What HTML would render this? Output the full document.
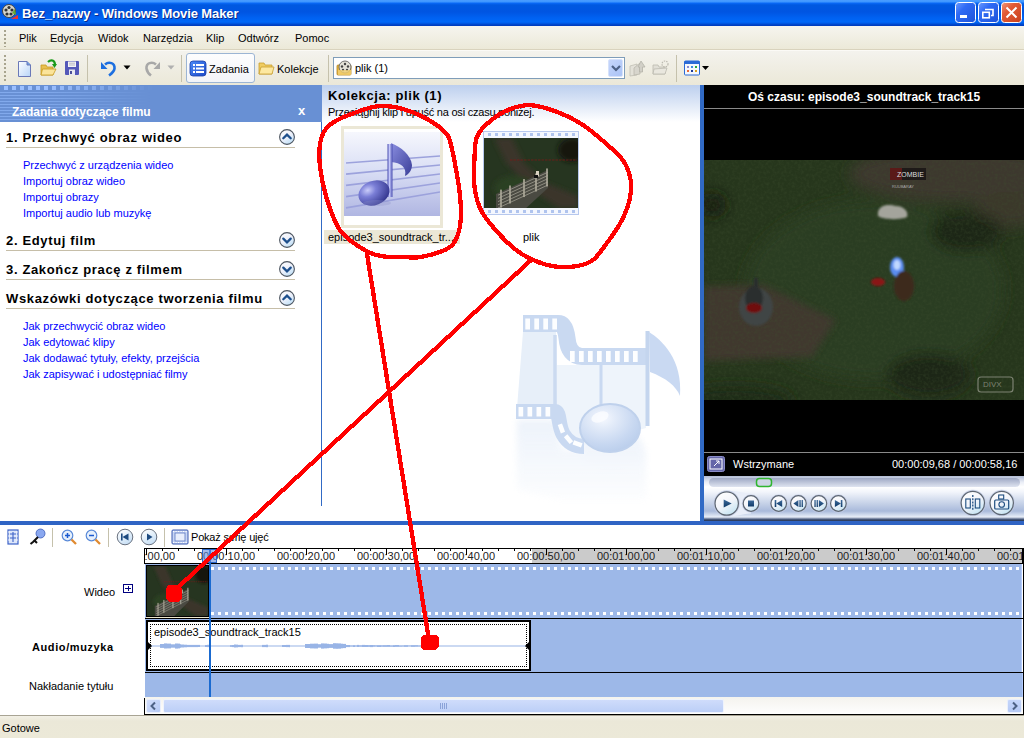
<!DOCTYPE html>
<html><head><meta charset="utf-8">
<style>
*{margin:0;padding:0;box-sizing:border-box}
html,body{width:1024px;height:738px;overflow:hidden;background:#fff;font-family:"Liberation Sans",sans-serif;font-size:11px;color:#000}
.a{position:absolute}
.t{position:absolute;white-space:nowrap;line-height:1}
#title{left:0;top:0;width:1024px;height:26px;background:linear-gradient(#4a9cff 0,#3d95ff 2px,#0a6af8 3px,#0058e0 5px,#0055e2 12px,#0062f2 18px,#0068f8 22px,#0050d8 24px,#003ec0 25px,#003ec0 26px)}
#menu{left:0;top:26px;width:1024px;height:24px;background:linear-gradient(#f6f5ef,#ece9d8);border-bottom:1px solid #d8d2bd}
#tool{left:0;top:50px;width:1024px;height:35px;background:linear-gradient(#f4f3ee,#ebe8d8)}
#task{left:0;top:85px;width:322px;height:436px;background:#fff}
#taskhdr{left:0;top:85px;width:322px;height:37px;background:#6890d4}
#coll{left:322px;top:85px;width:378px;height:436px;background:linear-gradient(#bccfee 0px,#fff 37px,#fff)}
#prev{left:700px;top:85px;width:324px;height:436px;background:#000;border-left:4px solid #316ac5}
#sep{left:0;top:521px;width:1024px;height:4px;background:#2f64c4}
#tltool{left:0;top:525px;width:1024px;height:23px;background:#fff}
#status{left:0;top:715px;width:1024px;height:23px;background:linear-gradient(#a8a494 0,#a8a494 1px,#f2f0e6 1px,#ebe8d8 6px,#ece9d8)}
.ttl{color:#fff;font-weight:bold;font-size:13px;letter-spacing:-0.1px;text-shadow:1px 1px 0 #0a2a8a}
.menu{font-size:11px}
.link{color:#0000ff;font-size:11px}
.rl{font-size:11px;color:#222}
.hd{font-weight:bold;font-size:13px;letter-spacing:0.65px}
</style></head><body>
<div id="title" class="a"></div>
<div class="t ttl" style="left:22px;top:7px;">Bez_nazwy - Windows Movie Maker</div>
<div id="menu" class="a"></div>
<div class="t menu" style="left:19px;top:33px">Plik</div>
<div class="t menu" style="left:50px;top:33px">Edycja</div>
<div class="t menu" style="left:98px;top:33px">Widok</div>
<div class="t menu" style="left:143px;top:33px">Narzędzia</div>
<div class="t menu" style="left:206px;top:33px">Klip</div>
<div class="t menu" style="left:238px;top:33px">Odtwórz</div>
<div class="t menu" style="left:295px;top:33px">Pomoc</div>
<div id="tool" class="a"></div>
<div id="task" class="a"></div>
<div id="taskhdr" class="a"></div>
<div class="a" style="left:0;top:92px;width:322px;height:30px;background:repeating-linear-gradient(to bottom,rgba(150,190,255,.55) 0 1px,transparent 1px 3px);-webkit-mask-image:linear-gradient(to right,#000 0,#000 40px,transparent 150px)"></div>
<div class="a" style="left:4px;top:86px;width:318px;height:4px;background:repeating-linear-gradient(to right,#9cc0ff 0 4px,transparent 4px 8px);-webkit-mask-image:linear-gradient(to right,#000 0,#000 40px,transparent 150px)"></div>
<div class="t" style="left:298px;top:104px;color:#fff;font-weight:bold;font-size:13px">x</div>
<div class="t" style="left:12px;top:106px;color:#fff;font-weight:bold;font-size:12px">Zadania dotyczące filmu</div>

<!-- task pane content --><svg width="0" height="0" style="position:absolute"><defs><linearGradient id="tg" x1="0" y1="0" x2="0.7" y2="1"><stop offset="0" stop-color="#fff"/><stop offset="0.55" stop-color="#eef1fb"/><stop offset="1" stop-color="#bfe0f7"/></linearGradient></defs></svg><svg class="a" style="left:279px;top:129px" width="16" height="16"><circle cx="8" cy="8" r="7.4" fill="url(#tg)" stroke="#4d5560" stroke-width="1.1"/><path d="M4.3 9.3 L8 5.6 L11.7 9.3" stroke="#1d4f8c" stroke-width="2.3" fill="none" stroke-linecap="round"/></svg><svg class="a" style="left:279px;top:232px" width="16" height="16"><circle cx="8" cy="8" r="7.4" fill="url(#tg)" stroke="#4d5560" stroke-width="1.1"/><path d="M4.3 6.6 L8 10.3 L11.7 6.6" stroke="#1d4f8c" stroke-width="2.3" fill="none" stroke-linecap="round"/></svg><svg class="a" style="left:279px;top:261px" width="16" height="16"><circle cx="8" cy="8" r="7.4" fill="url(#tg)" stroke="#4d5560" stroke-width="1.1"/><path d="M4.3 6.6 L8 10.3 L11.7 6.6" stroke="#1d4f8c" stroke-width="2.3" fill="none" stroke-linecap="round"/></svg><svg class="a" style="left:279px;top:290px" width="16" height="16"><circle cx="8" cy="8" r="7.4" fill="url(#tg)" stroke="#4d5560" stroke-width="1.1"/><path d="M4.3 9.3 L8 5.6 L11.7 9.3" stroke="#1d4f8c" stroke-width="2.3" fill="none" stroke-linecap="round"/></svg>
<div class="t hd" style="left:6px;top:131px">1. Przechwyć obraz wideo</div>
<div class="a" style="left:6px;top:147px;width:289px;height:1px;background:#c6bea8"></div>
<div class="t link" style="left:23px;top:160px">Przechwyć z urządzenia wideo</div>
<div class="t link" style="left:23px;top:176px">Importuj obraz wideo</div>
<div class="t link" style="left:23px;top:192px">Importuj obrazy</div>
<div class="t link" style="left:23px;top:208px">Importuj audio lub muzykę</div>
<div class="t hd" style="left:6px;top:234px">2. Edytuj film</div>
<div class="a" style="left:6px;top:250px;width:289px;height:1px;background:#c6bea8"></div>
<div class="t hd" style="left:6px;top:263px">3. Zakończ pracę z filmem</div>
<div class="a" style="left:6px;top:279px;width:289px;height:1px;background:#c6bea8"></div>
<div class="t hd" style="left:6px;top:292px">Wskazówki dotyczące tworzenia filmu</div>
<div class="a" style="left:6px;top:308px;width:289px;height:1px;background:#c6bea8"></div>
<div class="t link" style="left:23px;top:321px">Jak przechwycić obraz wideo</div>
<div class="t link" style="left:23px;top:337px">Jak edytować klipy</div>
<div class="t link" style="left:23px;top:353px">Jak dodawać tytuły, efekty, przejścia</div>
<div class="t link" style="left:23px;top:369px">Jak zapisywać i udostępniać filmy</div>
<div id="coll" class="a"></div>

<div class="t" style="left:328px;top:89px;font-weight:bold;font-size:13px;letter-spacing:0.6px">Kolekcja: plik (1)</div>
<div class="t" style="left:328px;top:107px;font-size:11px;letter-spacing:-0.22px">Przeciągnij klip i upuść na osi czasu poniżej.</div>
<div class="a" style="left:321px;top:122px;width:1px;height:384px;background:#316ac5"></div>
<div id="prev" class="a"></div>

<div class="t" style="left:748px;top:91px;color:#fff;font-weight:bold;font-size:12px">Oś czasu: episode3_soundtrack_track15</div>
<div class="a" style="left:704px;top:108px;width:320px;height:1px;background:#8a8a8a"></div>
<div id="game" class="a" style="left:704px;top:160px;width:320px;height:240px;background:#2c3a22"></div>
<div class="a" style="left:704px;top:452px;width:320px;height:1px;background:#8a8a8a"></div>
<div class="t" style="left:733px;top:459px;color:#fff;font-size:11px">Wstrzymane</div>
<div class="t" style="left:892px;top:459px;color:#fff;font-size:11px">00:00:09,68 / 00:00:58,16</div>
<div class="a" style="left:704px;top:476px;width:320px;height:45px;background:linear-gradient(#b3bdd6 0px,#e9edf6 6px,#fff 11px,#f2f5fb 16px,#cbd6ea 26px,#a9badb 35px,#e8eef8 41px,#5f6f8f 43px,#2f3f5f 44px)"></div>
<div id="sep" class="a"></div>
<div id="tltool" class="a"></div>

<!-- timeline -->
<div class="t" style="left:84px;top:587px;font-size:11px">Wideo</div>
<div class="a" style="left:123px;top:584px;width:10px;height:9px;border:1px solid #000080"></div>
<div class="a" style="left:125px;top:588px;width:6px;height:1px;background:#000080"></div>
<div class="a" style="left:127.5px;top:586px;width:1px;height:5px;background:#000080"></div>
<div class="t" style="left:32px;top:642px;font-size:11px;font-weight:bold;letter-spacing:0.6px">Audio/muzyka</div>
<div class="t" style="left:29px;top:681px;font-size:11px">Nakładanie tytułu</div>
<div class="a" style="left:144px;top:548px;width:880px;height:16px;background:#000"></div><div class="a" style="left:1023px;top:548px;width:1px;height:167px;background:#000"></div><div class="a" style="left:145px;top:618px;width:878px;height:1px;background:#000"></div><div class="a" style="left:145px;top:672px;width:878px;height:1px;background:#000"></div><div class="a" style="left:144px;top:698px;width:1px;height:17px;background:#000"></div><div class="a" style="left:144px;top:714px;width:880px;height:1px;background:#000"></div>
<div class="a" style="left:145px;top:549px;width:877px;height:14px;background:#cbcbcb;overflow:hidden">
  <div class="a" style="left:0;top:0;width:387px;height:14px;background:#fff"></div>
</div>
<div id="ruler" class="a" style="left:145px;top:549px;width:877px;height:14px;overflow:hidden"><div class="t rl" style="left:-29px;top:2px;width:60px;text-align:center">00:00:00,00</div><div class="t rl" style="left:51px;top:2px;width:60px;text-align:center">00:00:10,00</div><div class="t rl" style="left:131px;top:2px;width:60px;text-align:center">00:00:20,00</div><div class="t rl" style="left:211px;top:2px;width:60px;text-align:center">00:00:30,00</div><div class="t rl" style="left:291px;top:2px;width:60px;text-align:center">00:00:40,00</div><div class="t rl" style="left:371px;top:2px;width:60px;text-align:center">00:00:50,00</div><div class="t rl" style="left:451px;top:2px;width:60px;text-align:center">00:01:00,00</div><div class="t rl" style="left:531px;top:2px;width:60px;text-align:center">00:01:10,00</div><div class="t rl" style="left:611px;top:2px;width:60px;text-align:center">00:01:20,00</div><div class="t rl" style="left:691px;top:2px;width:60px;text-align:center">00:01:30,00</div><div class="t rl" style="left:771px;top:2px;width:60px;text-align:center">00:01:40,00</div><div class="t rl" style="left:851px;top:2px;width:60px;text-align:center">00:01:50,00</div><div class="a" style="left:1px;top:0;width:1px;height:6px;background:#000"></div><div class="a" style="left:17px;top:0;width:1px;height:2px;background:#000"></div><div class="a" style="left:33px;top:0;width:1px;height:2px;background:#000"></div><div class="a" style="left:49px;top:0;width:1px;height:2px;background:#000"></div><div class="a" style="left:65px;top:0;width:1px;height:2px;background:#000"></div><div class="a" style="left:81px;top:0;width:1px;height:6px;background:#000"></div><div class="a" style="left:97px;top:0;width:1px;height:2px;background:#000"></div><div class="a" style="left:113px;top:0;width:1px;height:2px;background:#000"></div><div class="a" style="left:129px;top:0;width:1px;height:2px;background:#000"></div><div class="a" style="left:145px;top:0;width:1px;height:2px;background:#000"></div><div class="a" style="left:161px;top:0;width:1px;height:6px;background:#000"></div><div class="a" style="left:177px;top:0;width:1px;height:2px;background:#000"></div><div class="a" style="left:193px;top:0;width:1px;height:2px;background:#000"></div><div class="a" style="left:209px;top:0;width:1px;height:2px;background:#000"></div><div class="a" style="left:225px;top:0;width:1px;height:2px;background:#000"></div><div class="a" style="left:241px;top:0;width:1px;height:6px;background:#000"></div><div class="a" style="left:257px;top:0;width:1px;height:2px;background:#000"></div><div class="a" style="left:273px;top:0;width:1px;height:2px;background:#000"></div><div class="a" style="left:289px;top:0;width:1px;height:2px;background:#000"></div><div class="a" style="left:305px;top:0;width:1px;height:2px;background:#000"></div><div class="a" style="left:321px;top:0;width:1px;height:6px;background:#000"></div><div class="a" style="left:337px;top:0;width:1px;height:2px;background:#000"></div><div class="a" style="left:353px;top:0;width:1px;height:2px;background:#000"></div><div class="a" style="left:369px;top:0;width:1px;height:2px;background:#000"></div><div class="a" style="left:385px;top:0;width:1px;height:2px;background:#000"></div><div class="a" style="left:401px;top:0;width:1px;height:6px;background:#000"></div><div class="a" style="left:417px;top:0;width:1px;height:2px;background:#000"></div><div class="a" style="left:433px;top:0;width:1px;height:2px;background:#000"></div><div class="a" style="left:449px;top:0;width:1px;height:2px;background:#000"></div><div class="a" style="left:465px;top:0;width:1px;height:2px;background:#000"></div><div class="a" style="left:481px;top:0;width:1px;height:6px;background:#000"></div><div class="a" style="left:497px;top:0;width:1px;height:2px;background:#000"></div><div class="a" style="left:513px;top:0;width:1px;height:2px;background:#000"></div><div class="a" style="left:529px;top:0;width:1px;height:2px;background:#000"></div><div class="a" style="left:545px;top:0;width:1px;height:2px;background:#000"></div><div class="a" style="left:561px;top:0;width:1px;height:6px;background:#000"></div><div class="a" style="left:577px;top:0;width:1px;height:2px;background:#000"></div><div class="a" style="left:593px;top:0;width:1px;height:2px;background:#000"></div><div class="a" style="left:609px;top:0;width:1px;height:2px;background:#000"></div><div class="a" style="left:625px;top:0;width:1px;height:2px;background:#000"></div><div class="a" style="left:641px;top:0;width:1px;height:6px;background:#000"></div><div class="a" style="left:657px;top:0;width:1px;height:2px;background:#000"></div><div class="a" style="left:673px;top:0;width:1px;height:2px;background:#000"></div><div class="a" style="left:689px;top:0;width:1px;height:2px;background:#000"></div><div class="a" style="left:705px;top:0;width:1px;height:2px;background:#000"></div><div class="a" style="left:721px;top:0;width:1px;height:6px;background:#000"></div><div class="a" style="left:737px;top:0;width:1px;height:2px;background:#000"></div><div class="a" style="left:753px;top:0;width:1px;height:2px;background:#000"></div><div class="a" style="left:769px;top:0;width:1px;height:2px;background:#000"></div><div class="a" style="left:785px;top:0;width:1px;height:2px;background:#000"></div><div class="a" style="left:801px;top:0;width:1px;height:6px;background:#000"></div><div class="a" style="left:817px;top:0;width:1px;height:2px;background:#000"></div><div class="a" style="left:833px;top:0;width:1px;height:2px;background:#000"></div><div class="a" style="left:849px;top:0;width:1px;height:2px;background:#000"></div><div class="a" style="left:865px;top:0;width:1px;height:2px;background:#000"></div></div>
<div class="a" style="left:145px;top:564px;width:877px;height:54px;background:#9db8e8;border-right:1px solid #b4ccff"></div>
<div class="a" style="left:211px;top:567px;width:811px;height:3px;background:repeating-linear-gradient(to right,#fff 0 3px,transparent 3px 7px)"></div>
<div class="a" style="left:211px;top:612px;width:811px;height:3px;background:repeating-linear-gradient(to right,#fff 0 3px,transparent 3px 7px)"></div>
<div class="a" style="left:145px;top:619px;width:877px;height:53px;background:#9db8e8;border-right:1px solid #b4ccff"></div>
<div class="a" style="left:145px;top:673px;width:878px;height:24px;background:#9db8e8;border-right:1px solid #b4ccff"></div>
<div class="a" style="left:145px;top:697px;width:878px;height:17px;background:linear-gradient(#f4f3ee,#fefefe)"></div>
<div class="a" style="left:146px;top:699px;width:15px;height:14px;border-radius:2px;background:linear-gradient(135deg,#d2defc,#b5c9f5);border:1px solid #e9effc"></div>
<div class="a" style="left:163px;top:699px;width:561px;height:14px;border-radius:2px;background:linear-gradient(#cfdcfb,#bccff7);border:1px solid #eef3fd"></div>
<div class="a" style="left:1007px;top:699px;width:15px;height:14px;border-radius:2px;background:linear-gradient(#c5d6fb,#b5c9f5);border:1px solid #e9effc"></div>
<svg class="a" style="left:146px;top:699px" width="15" height="14"><path d="M9,3.5 L5.5,7 L9,10.5" fill="none" stroke="#4d6185" stroke-width="2"/></svg>
<svg class="a" style="left:1007px;top:699px" width="15" height="14"><path d="M6,3.5 L9.5,7 L6,10.5" fill="none" stroke="#4d6185" stroke-width="2"/></svg>
<div class="a" style="left:440px;top:703px;width:8px;height:6px;background:repeating-linear-gradient(to right,#8aa2d8 0 1px,transparent 1px 2px)"></div>
<!-- audio clip -->
<div class="a" style="left:146px;top:620px;width:385px;height:51px;background:#000"></div>
<div class="a" style="left:148px;top:622px;width:381px;height:47px;background:#fff"></div>
<div class="a" style="left:150px;top:624px;width:377px;height:43px;border:1px dotted #000"></div>
<div class="t" style="left:154px;top:627px;font-size:11px">episode3_soundtrack_track15</div>
<svg class="a" style="left:146px;top:621px" width="385" height="51"><g fill="#98b4e6"><rect x="4" y="24.5" width="10" height="1"/><rect x="14" y="23.0" width="4" height="3.9"/><rect x="18" y="22.4" width="3" height="5.1"/><rect x="21" y="22.6" width="4" height="4.8"/><rect x="25" y="23.3" width="4" height="3.4"/><rect x="29" y="22.5" width="3" height="5.1"/><rect x="32" y="22.6" width="2" height="4.8"/><rect x="34" y="23.2" width="1" height="3.6"/><rect x="35" y="23.5" width="3" height="3.0"/><rect x="38" y="23.7" width="3" height="2.6"/><rect x="41" y="23.9" width="4" height="2.2"/><rect x="45" y="23.9" width="4" height="2.2"/><rect x="49" y="23.9" width="3" height="2.2"/><rect x="52" y="23.9" width="2" height="2.1"/><rect x="54" y="24.5" width="5" height="1"/><rect x="59" y="24.0" width="2" height="2.0"/><rect x="61" y="23.8" width="4" height="2.3"/><rect x="65" y="24.5" width="19" height="1"/><rect x="84" y="24.1" width="2" height="1.8"/><rect x="86" y="24.0" width="2" height="2.1"/><rect x="88" y="23.5" width="2" height="3.0"/><rect x="90" y="23.6" width="2" height="2.8"/><rect x="92" y="23.9" width="3" height="2.2"/><rect x="95" y="23.8" width="2" height="2.4"/><rect x="97" y="24.5" width="19" height="1"/><rect x="116" y="23.9" width="4" height="2.2"/><rect x="120" y="23.7" width="2" height="2.5"/><rect x="122" y="24.5" width="14" height="1"/><rect x="136" y="24.0" width="4" height="2.0"/><rect x="140" y="23.9" width="3" height="2.2"/><rect x="143" y="23.9" width="1" height="2.3"/><rect x="144" y="24.5" width="15" height="1"/><rect x="159" y="23.0" width="2" height="4.0"/><rect x="161" y="23.0" width="3" height="4.0"/><rect x="164" y="22.7" width="4" height="4.7"/><rect x="168" y="22.6" width="4" height="4.9"/><rect x="172" y="23.2" width="3" height="3.5"/><rect x="175" y="22.4" width="3" height="5.2"/><rect x="178" y="22.5" width="3" height="4.9"/><rect x="181" y="22.8" width="2" height="4.4"/><rect x="183" y="23.1" width="4" height="3.8"/><rect x="187" y="22.2" width="3" height="5.5"/><rect x="190" y="22.3" width="2" height="5.5"/><rect x="192" y="22.4" width="3" height="5.3"/><rect x="195" y="22.7" width="2" height="4.6"/><rect x="197" y="22.9" width="3" height="4.2"/><rect x="200" y="24.0" width="4" height="2.1"/><rect x="204" y="24.3" width="3" height="1.4"/><rect x="207" y="24.1" width="2" height="1.9"/><rect x="209" y="24.3" width="2" height="1.4"/><rect x="211" y="23.9" width="2" height="2.1"/><rect x="213" y="24.2" width="3" height="1.6"/><rect x="216" y="23.9" width="3" height="2.1"/><rect x="219" y="24.0" width="3" height="2.0"/><rect x="222" y="24.1" width="2" height="1.8"/><rect x="224" y="24.0" width="3" height="2.1"/><rect x="227" y="24.1" width="2" height="1.7"/><rect x="229" y="24.2" width="2" height="1.5"/><rect x="231" y="24.1" width="4" height="1.9"/><rect x="235" y="24.2" width="2" height="1.6"/><rect x="237" y="24.1" width="4" height="1.8"/><rect x="241" y="24.0" width="3" height="1.9"/><rect x="244" y="24.3" width="3" height="1.5"/><rect x="247" y="24.1" width="2" height="1.9"/><rect x="249" y="24.0" width="4" height="1.9"/><rect x="253" y="24.3" width="3" height="1.5"/><rect x="256" y="24.3" width="2" height="1.4"/><rect x="258" y="24.1" width="4" height="1.8"/><rect x="262" y="24.3" width="3" height="1.3"/><rect x="265" y="24.1" width="4" height="1.8"/><rect x="269" y="24.1" width="3" height="1.7"/><rect x="272" y="24.3" width="3" height="1.4"/><rect x="275" y="24.3" width="1" height="1.3"/><rect x="276" y="24.5" width="105" height="1"/></g><path d="M2,21 L6,25 L2,29Z" fill="#000"/><path d="M383,21 L379,25 L383,29Z" fill="#000"/></svg>
<!-- video thumb -->
<div class="a" style="left:146px;top:565px;width:64px;height:52px;background:#000"></div><div class="a" style="left:146px;top:617px;width:63px;height:1px;background:#efe8cc"></div><div class="a" style="left:147px;top:566px;width:61px;height:50px;overflow:hidden"><svg width="61" height="50" viewBox="0 0 94 70" preserveAspectRatio="none" style="display:block">
<defs><filter id="t2b"><feGaussianBlur stdDeviation="2.5"/></filter></defs>
<rect width="94" height="70" fill="#263520"/>
<g filter="url(#t2b)">
<path d="M10,0 L28,0 L40,25 L62,45 L94,58 L94,70 L75,70 L52,55 L22,25Z" fill="#3b3529"/>
<ellipse cx="88" cy="12" rx="14" ry="12" fill="#121810"/>
<ellipse cx="30" cy="50" rx="20" ry="12" fill="#2c4024"/>
</g>
<path d="M12,72 L12,56 L64,32 L64,50 L40,72Z" fill="#4a4a42"/><line x1="14" y1="70.0" x2="64" y2="47.0" stroke="#8e8c80" stroke-width="1"/><line x1="14" y1="66.8" x2="64" y2="43.8" stroke="#8e8c80" stroke-width="1"/><line x1="14" y1="63.6" x2="64" y2="40.6" stroke="#8e8c80" stroke-width="1"/><line x1="14" y1="60.4" x2="64" y2="37.4" stroke="#8e8c80" stroke-width="1"/><line x1="14" y1="57.2" x2="64" y2="34.2" stroke="#8e8c80" stroke-width="1"/><rect x="16.2" y="51.620000000000005" width="1.6" height="18" fill="#b0ac9c"/><rect x="25.2" y="47.480000000000004" width="1.6" height="18" fill="#b0ac9c"/><rect x="39.2" y="41.04" width="1.6" height="18" fill="#b0ac9c"/><rect x="51.2" y="35.519999999999996" width="1.6" height="18" fill="#b0ac9c"/><rect x="62.2" y="30.459999999999994" width="1.6" height="18" fill="#b0ac9c"/>
<rect x="52" y="33" width="3" height="5" fill="#d8d0c0"/><rect x="50" y="37" width="4" height="3" fill="#111"/>
<line x1="26" y1="22" x2="93" y2="22" stroke="#7a1a18" stroke-width="0.8" stroke-dasharray="2.5,1"/>
</svg></div>
<!-- playhead -->
<div class="a" style="left:209px;top:549px;width:2px;height:148px;background:#1a6ad0"></div>
<div class="a" style="left:202px;top:549px;width:15px;height:14px;background:rgba(100,140,220,.6);border:1px solid #2a66c8"></div>
<div id="status" class="a"></div>
<div class="t" style="left:2px;top:723px">Gotowe</div>
<!-- GAME --><div class="a" style="left:704px;top:160px;width:320px;height:240px;overflow:hidden"><svg width="320" height="240" viewBox="0 0 320 240" preserveAspectRatio="none" style="display:block">
<defs><filter id="gb" x="-100%" y="-100%" width="300%" height="300%" filterUnits="objectBoundingBox"><feGaussianBlur stdDeviation="7"/></filter>
<filter id="gs" x="-50%" y="-50%" width="200%" height="200%"><feGaussianBlur stdDeviation="1.2"/></filter><filter id="gm" x="-20%" y="-20%" width="140%" height="140%"><feGaussianBlur stdDeviation="3.5"/></filter>
<filter id="gn" x="0" y="0" width="100%" height="100%"><feTurbulence type="fractalNoise" baseFrequency="0.35" numOctaves="2" seed="3"/><feColorMatrix values="0 0 0 0 0.05  0 0 0 0 0.08  0 0 0 0 0.03  0 0 0 1.4 -0.55"/></filter></defs>
<rect width="320" height="240" fill="#26361c"/>
<g filter="url(#gb)">
<ellipse cx="170" cy="130" rx="130" ry="90" fill="#2a3d20"/>
<ellipse cx="250" cy="14" rx="105" ry="28" fill="#3d382d"/>
<ellipse cx="305" cy="50" rx="35" ry="18" fill="#3b372c"/>

<ellipse cx="8" cy="45" rx="14" ry="12" fill="#141a10"/>
<ellipse cx="262" cy="72" rx="36" ry="20" fill="#1c2616"/>
<ellipse cx="225" cy="215" rx="42" ry="22" fill="#1d2717"/>
<ellipse cx="30" cy="240" rx="60" ry="14" fill="#1e2a17"/>
</g>
<path d="M0,126 L60,125 L132,160 L108,197 L0,201Z" fill="#3f382d" filter="url(#gm)"/>
<rect width="320" height="240" filter="url(#gn)" opacity="0.5"/>
<g filter="url(#gs)">
<path d="M174,52 C176,44 186,44 192,46 C200,46 205,52 203,57 C196,60 180,60 174,56Z" fill="#a4a49c"/>
<ellipse cx="52" cy="147" rx="17" ry="19" fill="#3f4545"/><ellipse cx="50" cy="138" rx="9" ry="12" fill="#2a2e2e"/>
<rect x="50" y="118" width="4" height="18" fill="#2a2e2e"/>
<ellipse cx="50" cy="148" rx="8" ry="5" fill="#701010"/>
<ellipse cx="193" cy="107" rx="7" ry="10" fill="#5a8cf0"/><ellipse cx="193" cy="105" rx="3.5" ry="5" fill="#c0d8ff"/>
<ellipse cx="200" cy="126" rx="10" ry="15" fill="#3e2c1e"/>
<ellipse cx="174" cy="122" rx="7" ry="4" fill="#8a1212"/>
</g>
<rect x="186" y="8" width="36" height="12" fill="#1e1a18"/><rect x="186" y="8" width="12" height="12" fill="#5a1a18"/>
<text x="193" y="17" font-family="Liberation Sans" font-size="7" fill="#ddd">ZOMBIE</text>
<text x="188" y="28" font-family="Liberation Sans" font-size="4" fill="#aaa">RUUBARAY</text>
<rect x="274" y="217" width="35" height="15" rx="3" fill="none" stroke="#7c8272" stroke-width="1.2"/>
<text x="279" y="227" font-family="Liberation Sans" font-size="8" fill="#7c8272">DIVX</text>
</svg></div><!-- /GAME -->
<!-- COLL -->
<div class="a" style="left:483px;top:131px;width:96px;height:84px;background:#f4f7fe;border:1px solid #b7c8ee"></div>
<div class="a" style="left:485px;top:133px;width:92px;height:3px;background:repeating-linear-gradient(to right,transparent 0 3px,#b0c4ee 3px 6px,transparent 6px 7px)"></div>
<div class="a" style="left:485px;top:210px;width:92px;height:3px;background:repeating-linear-gradient(to right,transparent 0 3px,#b0c4ee 3px 6px,transparent 6px 7px)"></div>
<div class="a" style="left:484px;top:138px;width:94px;height:70px;overflow:hidden"><svg width="94" height="70" viewBox="0 0 94 70" preserveAspectRatio="none" style="display:block">
<defs><filter id="t1b"><feGaussianBlur stdDeviation="2.5"/></filter></defs>
<rect width="94" height="70" fill="#263520"/>
<g filter="url(#t1b)">
<path d="M10,0 L28,0 L40,25 L62,45 L94,58 L94,70 L75,70 L52,55 L22,25Z" fill="#3b3529"/>
<ellipse cx="88" cy="12" rx="14" ry="12" fill="#121810"/>
<ellipse cx="30" cy="50" rx="20" ry="12" fill="#2c4024"/>
</g>
<path d="M12,72 L12,56 L64,32 L64,50 L40,72Z" fill="#4a4a42"/><line x1="14" y1="70.0" x2="64" y2="47.0" stroke="#8e8c80" stroke-width="1"/><line x1="14" y1="66.8" x2="64" y2="43.8" stroke="#8e8c80" stroke-width="1"/><line x1="14" y1="63.6" x2="64" y2="40.6" stroke="#8e8c80" stroke-width="1"/><line x1="14" y1="60.4" x2="64" y2="37.4" stroke="#8e8c80" stroke-width="1"/><line x1="14" y1="57.2" x2="64" y2="34.2" stroke="#8e8c80" stroke-width="1"/><rect x="16.2" y="51.620000000000005" width="1.6" height="18" fill="#b0ac9c"/><rect x="25.2" y="47.480000000000004" width="1.6" height="18" fill="#b0ac9c"/><rect x="39.2" y="41.04" width="1.6" height="18" fill="#b0ac9c"/><rect x="51.2" y="35.519999999999996" width="1.6" height="18" fill="#b0ac9c"/><rect x="62.2" y="30.459999999999994" width="1.6" height="18" fill="#b0ac9c"/>
<rect x="52" y="33" width="3" height="5" fill="#d8d0c0"/><rect x="50" y="37" width="4" height="3" fill="#111"/>
<line x1="26" y1="22" x2="93" y2="22" stroke="#7a1a18" stroke-width="0.8" stroke-dasharray="2.5,1"/>
</svg></div>
<div class="t" style="left:523px;top:232px;font-size:11px">plik</div>
<!-- music thumb -->
<div class="a" style="left:341px;top:126px;width:102px;height:102px;background:#fff;border:3px solid #ebe7d6"></div>
<div class="a" style="left:324px;top:230px;width:136px;height:14px;background:#ebe7d6"></div>
<div class="t" style="left:328px;top:232px;font-size:11px">episode3_soundtrack_tr...</div>
<div class="a" style="left:344px;top:132px;width:96px;height:84px;overflow:hidden">
<svg width="96" height="84" style="display:block">
<defs><linearGradient id="mbg" x1="0" y1="0" x2="0" y2="1"><stop offset="0" stop-color="#f6f7fd"/><stop offset="0.45" stop-color="#dadff5"/><stop offset="1" stop-color="#b0b6e2"/></linearGradient>
<radialGradient id="mnh" cx="0.35" cy="0.3" r="0.75"><stop offset="0" stop-color="#c9ccfa"/><stop offset="0.35" stop-color="#7a7ed6"/><stop offset="1" stop-color="#34378f"/></radialGradient>
<linearGradient id="mst" x1="0" y1="0" x2="1" y2="0"><stop offset="0" stop-color="#4a4eb0"/><stop offset="0.4" stop-color="#c4c8fa"/><stop offset="1" stop-color="#4a4eb0"/></linearGradient>
<linearGradient id="mfl" x1="0" y1="0" x2="1" y2="1"><stop offset="0" stop-color="#8a8ee0"/><stop offset="1" stop-color="#3a3e98"/></linearGradient></defs>
<rect width="96" height="84" fill="url(#mbg)"/>
<g stroke="#9ca2dc" stroke-width="1.7"><line x1="2" y1="31.0" x2="96" y2="24.0"/><line x1="2" y1="42.2" x2="96" y2="33.0"/><line x1="2" y1="53.4" x2="96" y2="42.0"/><line x1="2" y1="64.6" x2="96" y2="51.0"/><line x1="2" y1="75.8" x2="96" y2="60.0"/></g>
<path d="M47,11 C57,15 67,23 68,33 C68,38 65,42 61,44 C63,35 57,31 47,30Z" fill="url(#mfl)"/>
<rect x="43.5" y="12" width="5" height="53" fill="url(#mst)"/>
<ellipse cx="30" cy="61" rx="16" ry="12" fill="url(#mnh)" transform="rotate(-22 30 61)"/>
<ellipse cx="33" cy="71" rx="14" ry="3" fill="#8a8ec8" opacity="0.3"/>
</svg></div>
<!-- /COLL -->
<!-- WM --><svg class="a" style="left:500px;top:300px" width="200" height="220">
<defs>
<radialGradient id="wmh" cx="0.38" cy="0.3" r="0.75"><stop offset="0" stop-color="#f6f9ff"/><stop offset="0.25" stop-color="#e4ecf9"/><stop offset="0.7" stop-color="#c8d8f1"/><stop offset="1" stop-color="#b9cdeb"/></radialGradient>
<linearGradient id="wmfade" x1="0" y1="0" x2="0" y2="1"><stop offset="0" stop-color="#fff" stop-opacity="1"/><stop offset="1" stop-color="#fff" stop-opacity="0"/></linearGradient>
<filter id="wmb" x="-20%" y="-20%" width="140%" height="140%"><feGaussianBlur stdDeviation="3"/></filter>
<mask id="wmm"><rect x="0" y="105" width="200" height="110" fill="url(#wmfade)"/></mask>
</defs>
<g mask="url(#wmm)" filter="url(#wmb)" opacity="0.55">
<path d="M17,120 L55,120 L62,150 L146,150 L146,200 L60,200 L17,190Z" fill="#d9e5f6"/>
<ellipse cx="112" cy="150" rx="32" ry="22" fill="#d5e2f5"/>
</g>
<path d="M23,32 L56,32 L57,108 L17,108Z" fill="#e7eff9"/>
<path d="M57,65 L146,65 L146,128 L82,146 L62,132 L57,108Z" fill="#eef4fb"/>
<path d="M41,23.5 L58,23.5 C64,23.5 66,30 67,38 C68,50 73,56.5 82,56.5 L146,56.5" fill="none" stroke="#c9d9f1" stroke-width="17"/>
<rect x="23" y="15" width="20" height="17" fill="#c9d9f1"/>
<g fill="#fdfeff"><rect x="25.3" y="18.5" width="4.7" height="11"/><rect x="34.3" y="18.5" width="4.7" height="11"/><rect x="43.3" y="18.5" width="4.7" height="11"/><rect x="52.3" y="18.5" width="4.7" height="11"/><rect x="70.0" y="51" width="4.7" height="11"/><rect x="79.0" y="51" width="4.7" height="11"/><rect x="88.0" y="51" width="4.7" height="11"/><rect x="97.0" y="51" width="4.7" height="11"/><rect x="106.0" y="51" width="4.7" height="11"/><rect x="115.0" y="51" width="4.7" height="11"/><rect x="124.0" y="51" width="4.7" height="11"/><rect x="133.0" y="51" width="4.7" height="11"/></g>
<path d="M55,35 L55,108" stroke="#cbdaf0" stroke-width="3.5"/>
<path d="M101,65 L101,108" stroke="#c9d9f1" stroke-width="3"/>
<rect x="16" y="104" width="39" height="15" fill="#c9d9f1"/>
<g fill="#fdfeff"><rect x="18.5" y="107" width="4.7" height="9.5"/><rect x="27.5" y="107" width="4.7" height="9.5"/><rect x="36.5" y="107" width="4.7" height="9.5"/><rect x="45.5" y="107" width="4.7" height="9.5"/></g>
<path d="M55,111.5 C60,111.5 58,125 63,134 C67,141 74,146.5 84,146.5" fill="none" stroke="#c9d9f1" stroke-width="15"/>
<g fill="#fdfeff"><rect x="59" y="124" width="4.5" height="9" transform="rotate(-20 61 128)"/><rect x="66" y="135" width="4.5" height="9" transform="rotate(-40 68 139)"/><rect x="75" y="140" width="4.5" height="9" transform="rotate(-70 77 144)"/></g>
<rect x="145.5" y="31" width="4" height="95" fill="#c4d5ee"/>
<path d="M149,32 C162,40 183,60 180,96 C176,86 166,78 150,72Z" fill="#c9d9f2"/>
<ellipse cx="110" cy="128" rx="30" ry="24" fill="url(#wmh)" stroke="#bfd1ec" stroke-width="2"/>
<ellipse cx="100" cy="117" rx="9" ry="5" fill="#fbfdff" opacity="0.8" transform="rotate(-20 100 117)"/>
</svg><!-- /WM -->
<!-- TOOLBAR -->
<svg class="a" style="left:955px;top:2px" width="67" height="22">
<defs><linearGradient id="bb" x1="0" y1="0" x2="1" y2="1"><stop offset="0" stop-color="#6d9bff"/><stop offset="0.35" stop-color="#2f6bf5"/><stop offset="1" stop-color="#1d52d8"/></linearGradient>
<linearGradient id="rb" x1="0" y1="0" x2="1" y2="1"><stop offset="0" stop-color="#f09a7c"/><stop offset="0.35" stop-color="#e35b36"/><stop offset="1" stop-color="#c8401c"/></linearGradient></defs>
<rect x="0.5" y="0.5" width="20" height="20" rx="3" fill="url(#bb)" stroke="#fff"/>
<rect x="5" y="13" width="7" height="3" fill="#fff"/>
<rect x="23.5" y="0.5" width="20" height="20" rx="3" fill="url(#bb)" stroke="#fff"/>
<path d="M30,7.5 h8 v6 h-2" fill="none" stroke="#fff" stroke-width="1.6"/><rect x="27.8" y="10.3" width="6.5" height="5.5" fill="none" stroke="#fff" stroke-width="1.6"/>
<rect x="46.5" y="0.5" width="20" height="20" rx="3" fill="url(#rb)" stroke="#fff"/>
<path d="M51.5,5.5 L61.5,15.5 M61.5,5.5 L51.5,15.5" stroke="#fff" stroke-width="2"/>
</svg>
<svg class="a" style="left:2px;top:3px" width="17" height="17">
<circle cx="7" cy="8" r="6.5" fill="#d8d8d0" stroke="#444" stroke-width="1"/>
<g fill="#333"><circle cx="7" cy="4.5" r="1.6"/><circle cx="4" cy="7" r="1.6"/><circle cx="10" cy="7" r="1.6"/><circle cx="5" cy="11" r="1.6"/><circle cx="9" cy="11" r="1.6"/></g>
<path d="M10,10 L13,6 L14,12Z" fill="#6a3"/><path d="M9,16 L16,12 L16,16Z" fill="#e33"/>
</svg>
<!-- grips -->
<div class="a" style="left:4px;top:30px;width:2px;height:17px;background:repeating-linear-gradient(to bottom,#a8a48e 0 2px,transparent 2px 4px)"></div>
<div class="a" style="left:4px;top:55px;width:2px;height:26px;background:repeating-linear-gradient(to bottom,#a8a48e 0 2px,transparent 2px 4px)"></div>
<div class="a" style="left:0;top:49px;width:1024px;height:1px;background:#d9d3bd"></div>
<div class="a" style="left:0;top:50px;width:1024px;height:1px;background:#fbfaf6"></div>
<!-- separators -->
<div class="a" style="left:87px;top:55px;width:1px;height:27px;background:#c5c1ac"></div>
<div class="a" style="left:181px;top:55px;width:1px;height:27px;background:#c5c1ac"></div>
<div class="a" style="left:328px;top:55px;width:1px;height:27px;background:#c5c1ac"></div>
<div class="a" style="left:676px;top:55px;width:1px;height:27px;background:#c5c1ac"></div>
<!-- new -->
<svg class="a" style="left:17px;top:60px" width="16" height="18">
<defs><linearGradient id="nd" x1="0" y1="0" x2="1" y2="1"><stop offset="0" stop-color="#fff"/><stop offset="1" stop-color="#b8d4f8"/></linearGradient></defs>
<path d="M1.5,1.5 L10,1.5 L13.5,5 L13.5,16.5 L1.5,16.5Z" fill="url(#nd)" stroke="#6a78b8"/><path d="M10,1.5 L10,5 L13.5,5" fill="#6aa0e8" stroke="#6a78b8"/>
</svg>
<!-- open -->
<svg class="a" style="left:40px;top:59px" width="18" height="18">
<path d="M1,6 L6,6 L7,8 L13,8 L13,16 L1,16Z" fill="#e8c050" stroke="#c89a20" stroke-width="0.8"/>
<path d="M2.5,10 L16,10 L13,16 L1,16Z" fill="#fbe49a" stroke="#c89a20" stroke-width="0.8"/>
<path d="M8,3 C11,0 15,1 15,6" fill="none" stroke="#1a9a1a" stroke-width="2.2"/><path d="M12,5 L17,5 L14.5,9Z" fill="#1a9a1a"/>
</svg>
<!-- save -->
<svg class="a" style="left:64px;top:60px" width="16" height="16">
<rect x="1" y="1" width="14" height="14" rx="1" fill="#5458b8"/><rect x="4" y="1.5" width="8" height="5.5" fill="#f4f4f4"/><line x1="5" y1="3.2" x2="11" y2="3.2" stroke="#aab" stroke-width="0.8"/><line x1="5" y1="5" x2="11" y2="5" stroke="#aab" stroke-width="0.8"/><rect x="5" y="9.5" width="6" height="5.5" fill="#e8e8f0"/><rect x="6" y="11" width="2" height="3" fill="#4a4e98"/>
</svg>
<!-- undo -->
<svg class="a" style="left:100px;top:60px" width="18" height="17">
<path d="M5,4.5 C9,1 15,3 14.5,8.5 C14,12 11,14 9,15.5" fill="none" stroke="#1d6fe0" stroke-width="2.6"/><path d="M1,2 L7.5,9 L1,9Z" fill="#1d6fe0"/>
</svg>
<svg class="a" style="left:123px;top:65px" width="8" height="5"><path d="M0.5,0.5 L7.5,0.5 L4,4.5Z" fill="#000"/></svg>
<svg class="a" style="left:143px;top:60px" width="18" height="17">
<path d="M13,4.5 C9,1 3,3 3.5,8.5 C4,12 6,14 8,15.5" fill="none" stroke="#a8a8a8" stroke-width="2.6"/><path d="M17,2 L10.5,9 L17,9Z" fill="#a8a8a8"/>
</svg>
<svg class="a" style="left:167px;top:65px" width="8" height="5"><path d="M0.5,0.5 L7.5,0.5 L4,4.5Z" fill="#b0b0b0"/></svg>
<!-- Zadania button -->
<div class="a" style="left:186px;top:53px;width:69px;height:30px;border:1px solid #9cb5d4;border-radius:3px;background:linear-gradient(#fdfdfe,#f2f4f8)"></div>
<svg class="a" style="left:189px;top:60px" width="18" height="17">
<defs><linearGradient id="zd" x1="0" y1="0" x2="1" y2="1"><stop offset="0" stop-color="#4d8cf8"/><stop offset="1" stop-color="#1a48c8"/></linearGradient></defs>
<rect x="1" y="1" width="16" height="15" rx="3" fill="url(#zd)" stroke="#1a3fa8" stroke-width="0.8"/>
<g fill="#fff"><rect x="4" y="4" width="2" height="2"/><rect x="7" y="4" width="8" height="2"/><rect x="4" y="7.5" width="2" height="2"/><rect x="7" y="7.5" width="8" height="2"/><rect x="4" y="11" width="2" height="2"/><rect x="7" y="11" width="8" height="2"/></g>
</svg>
<div class="t" style="left:209px;top:64px;font-size:11px">Zadania</div>
<svg class="a" style="left:258px;top:60px" width="17" height="16">
<path d="M1,3 L6,3 L7,5 L14,5 L14,14 L1,14Z" fill="#f0cc60" stroke="#c8a030" stroke-width="0.8"/>
<path d="M3,7 L16,7 L14,14 L1,14Z" fill="#fde8a0" stroke="#c8a030" stroke-width="0.8"/>
</svg>
<div class="t" style="left:277px;top:64px;font-size:11px">Kolekcje</div>
<!-- combo -->
<div class="a" style="left:333px;top:57px;width:292px;height:22px;border:1px solid #7f9db9;background:#fff"></div>
<div class="a" style="left:608px;top:59px;width:15px;height:18px;border-radius:2px;background:linear-gradient(135deg,#c6d6fb,#aac3f6);border:1px solid #d6e2fb"></div>
<svg class="a" style="left:610px;top:63px" width="12" height="10"><path d="M2,3 L6,7 L10,3" fill="none" stroke="#4d6185" stroke-width="2.2"/></svg>
<svg class="a" style="left:336px;top:59px" width="18" height="18">
<rect x="1" y="6" width="14" height="10" rx="1" fill="#e8b840" stroke="#b08020" stroke-width="0.8"/>
<circle cx="9" cy="8" r="6" fill="#e4e2d8" stroke="#555" stroke-width="0.8"/>
<g fill="#444"><circle cx="9" cy="5" r="1.2"/><circle cx="6" cy="7.5" r="1.2"/><circle cx="12" cy="7.5" r="1.2"/><circle cx="7" cy="11" r="1.2"/><circle cx="11" cy="11" r="1.2"/></g>
<rect x="2" y="11" width="13" height="5" fill="#f3d070" opacity="0.8"/>
</svg>
<div class="t" style="left:355px;top:63px;font-size:11px">plik (1)</div>
<svg class="a" style="left:629px;top:59px" width="18" height="18" opacity="0.75">
<path d="M1,7 L8,5 L8,16 L1,17Z" fill="#e0ded6" stroke="#b0aea4" stroke-width="0.8"/>
<path d="M5,9 L11,4 L11,15 L5,16Z" fill="#d0cec6" stroke="#a8a69c" stroke-width="0.8"/>
<path d="M9,8 L12,2 L16,8 L13.5,8 L13.5,13 L10.5,13 L10.5,8Z" fill="#c8c6be" stroke="#a09e94" stroke-width="0.8"/>
</svg>
<svg class="a" style="left:652px;top:59px" width="18" height="18" opacity="0.75">
<path d="M1,6 L6,6 L7,8 L13,8 L13,15 L1,15Z" fill="#dcdad2" stroke="#aaa89e" stroke-width="0.8"/>
<path d="M2,10 L15,9 L13,15 L1,15Z" fill="#e8e6de" stroke="#aaa89e" stroke-width="0.8"/>
<circle cx="13" cy="5" r="3" fill="none" stroke="#a8a69c" stroke-width="1.2" stroke-dasharray="1.5,1"/>
</svg>
<svg class="a" style="left:684px;top:60px" width="17" height="16">
<rect x="0.5" y="1" width="15" height="14" rx="1" fill="#f6f8fc" stroke="#2b6ad6"/><rect x="0.5" y="1" width="15" height="3" fill="#2b6ad6"/>
<rect x="3" y="6" width="2" height="2" fill="#8a8ad0"/><rect x="7" y="6" width="2" height="2" fill="#3a8ae0"/><rect x="11" y="6" width="2" height="2" fill="#2aaa3a"/>
<rect x="3" y="10" width="2" height="2" fill="#e86a3a"/><rect x="7" y="10" width="2" height="2" fill="#1a3a9a"/><rect x="11" y="10" width="2" height="2" fill="#d8a020"/>
</svg>
<svg class="a" style="left:702px;top:66px" width="7" height="4"><path d="M0,0 L7,0 L3.5,4Z" fill="#000"/></svg>
<!-- /TOOLBAR -->
<!-- CTRL --><svg class="a" style="left:704px;top:476px" width="320" height="45">
<defs><linearGradient id="pbg" x1="0.2" y1="0" x2="0.8" y2="1"><stop offset="0" stop-color="#ffffff"/><stop offset="0.5" stop-color="#f2f4fa"/><stop offset="1" stop-color="#bfe2f2"/></linearGradient>
<linearGradient id="pgl" x1="0" y1="0" x2="0" y2="1"><stop offset="0" stop-color="#3d6a9a"/><stop offset="1" stop-color="#0f3a68"/></linearGradient>
<linearGradient id="sk" x1="0" y1="0" x2="0" y2="1"><stop offset="0" stop-color="#9ea8c4"/><stop offset="1" stop-color="#dfe4f0"/></linearGradient></defs>
<rect x="5" y="2" width="311" height="9" rx="4.5" fill="url(#sk)"/>
<rect x="52.5" y="2.5" width="15" height="8" rx="3" fill="#cdd5e4" stroke="#2fb52f" stroke-width="1.5"/>
<path d="M22.7,14.5 C34.7,14.5 39.0,17.5 47.0,17.5 L47.0,37.5 C39.0,37.5 34.7,40.5 22.7,40.5 Z" fill="#e9eef9"/><circle cx="22.700000000000045" cy="27.5" r="13.2" fill="#c4cde6" opacity="0.8"/><circle cx="22.700000000000045" cy="27.5" r="11.7" fill="url(#pbg)" stroke="#5d6672" stroke-width="1.2"/><path d="M19.700000000000045,23.5 L27.700000000000045,27.5 L19.700000000000045,31.5Z" fill="url(#pgl)"/><circle cx="47" cy="27.5" r="9.3" fill="#c4cde6" opacity="0.8"/><circle cx="47" cy="27.5" r="7.8" fill="url(#pbg)" stroke="#5d6672" stroke-width="1.2"/><rect x="44" y="24.5" width="6" height="6" fill="url(#pgl)"/><circle cx="74.70000000000005" cy="27.5" r="9.3" fill="#c4cde6" opacity="0.8"/><circle cx="74.70000000000005" cy="27.5" r="7.8" fill="url(#pbg)" stroke="#5d6672" stroke-width="1.2"/><rect x="70.70000000000005" y="24.0" width="1.6" height="7" fill="url(#pgl)"/><path d="M72.20000000000005,27.5 L78.20000000000005,24.0 L78.20000000000005,31.0Z" fill="url(#pgl)"/><circle cx="94.39999999999998" cy="27.5" r="9.3" fill="#c4cde6" opacity="0.8"/><circle cx="94.39999999999998" cy="27.5" r="7.8" fill="url(#pbg)" stroke="#5d6672" stroke-width="1.2"/><path d="M89.39999999999998,27.5 L94.39999999999998,24.0 L94.39999999999998,31.0Z" fill="url(#pgl)"/><rect x="95.39999999999998" y="24.0" width="1.3" height="7" fill="url(#pgl)"/><rect x="97.59999999999998" y="24.0" width="1.3" height="7" fill="url(#pgl)"/><circle cx="114.89999999999998" cy="27.5" r="9.3" fill="#c4cde6" opacity="0.8"/><circle cx="114.89999999999998" cy="27.5" r="7.8" fill="url(#pbg)" stroke="#5d6672" stroke-width="1.2"/><path d="M119.89999999999998,27.5 L114.89999999999998,24.0 L114.89999999999998,31.0Z" fill="url(#pgl)"/><rect x="112.59999999999998" y="24.0" width="1.3" height="7" fill="url(#pgl)"/><rect x="110.39999999999998" y="24.0" width="1.3" height="7" fill="url(#pgl)"/><circle cx="134.39999999999998" cy="27.5" r="9.3" fill="#c4cde6" opacity="0.8"/><circle cx="134.39999999999998" cy="27.5" r="7.8" fill="url(#pbg)" stroke="#5d6672" stroke-width="1.2"/><rect x="136.79999999999998" y="24.0" width="1.6" height="7" fill="url(#pgl)"/><path d="M136.89999999999998,27.5 L130.89999999999998,24.0 L130.89999999999998,31.0Z" fill="url(#pgl)"/><circle cx="268.79999999999995" cy="27" r="13.2" fill="#c4cde6" opacity="0.8"/><circle cx="268.79999999999995" cy="27" r="11.7" fill="url(#pbg)" stroke="#5d6672" stroke-width="1.2"/><rect x="261.79999999999995" y="23" width="4.5" height="9" fill="none" stroke="#1d4d80" stroke-width="1.1"/><rect x="271.29999999999995" y="23" width="4.5" height="9" fill="none" stroke="#1d4d80" stroke-width="1.1"/><line x1="268.79999999999995" y1="19" x2="268.79999999999995" y2="35" stroke="#1d4d80" stroke-width="1.3" stroke-dasharray="2,1.2"/><circle cx="297.70000000000005" cy="27" r="13.2" fill="#c4cde6" opacity="0.8"/><circle cx="297.70000000000005" cy="27" r="11.7" fill="url(#pbg)" stroke="#5d6672" stroke-width="1.2"/><rect x="290.70000000000005" y="24" width="14" height="9" rx="1" fill="none" stroke="#1d4d80" stroke-width="1.2"/><rect x="294.70000000000005" y="19" width="5" height="4" fill="none" stroke="#1d4d80" stroke-width="1.1"/><circle cx="297.70000000000005" cy="28.5" r="2.8" fill="none" stroke="#1d4d80" stroke-width="1.1"/>
</svg><!-- /CTRL -->
<!-- STAT --><svg class="a" style="left:707px;top:456px" width="18" height="16">
<rect x="0.5" y="0.5" width="17" height="15" rx="2" fill="#6466a8" stroke="#8a8cc8"/>
<rect x="3" y="3" width="12" height="10" fill="none" stroke="#fff" stroke-width="1"/>
<path d="M7,10 L12,5 M9,5 L12,5 L12,8" stroke="#fff" stroke-width="1" fill="none"/></svg><!-- /STAT -->
<!-- TLTOOL -->
<div class="a" style="left:52px;top:528px;width:1px;height:19px;background:#c5c1ac"></div>
<div class="a" style="left:108px;top:528px;width:1px;height:19px;background:#c5c1ac"></div>
<div class="a" style="left:164px;top:528px;width:1px;height:19px;background:#c5c1ac"></div>
<svg class="a" style="left:7px;top:529px" width="13" height="16">
<rect x="1" y="1" width="10" height="14" fill="#dde6fa" stroke="#3d63c8" stroke-width="1.2"/>
<path d="M6,3 L6,13 M3,5 L9,5 M3,9 L9,9" stroke="#3d63c8" stroke-width="1.1"/>
<path d="M1,3 h2 M1,7 h2 M1,11 h2 M9,3 h2 M9,7 h2 M9,11 h2" stroke="#fff" stroke-width="0.8"/>
</svg>
<svg class="a" style="left:29px;top:528px" width="17" height="17">
<circle cx="11.5" cy="5.5" r="4.5" fill="#8aa8f0" stroke="#3a5ab8" stroke-width="0.8"/>
<path d="M9,9 L4,14 L1.5,16 M5,12 L8,15" stroke="#111" stroke-width="2" fill="none"/>
</svg>
<svg class="a" style="left:61px;top:529px" width="17" height="17">
<circle cx="6.5" cy="6.5" r="5.3" fill="#e6f0fc" stroke="#5a8ad8" stroke-width="1.2"/>
<path d="M4,6.5 h5 M6.5,4 v5" stroke="#1a5ad0" stroke-width="1.5"/>
<path d="M10.5,10.5 L15,15" stroke="#e08a30" stroke-width="2.3"/>
</svg>
<svg class="a" style="left:85px;top:529px" width="17" height="17">
<circle cx="6.5" cy="6.5" r="5.3" fill="#e6f0fc" stroke="#5a8ad8" stroke-width="1.2"/>
<path d="M4,6.5 h5" stroke="#1a5ad0" stroke-width="1.5"/>
<path d="M10.5,10.5 L15,15" stroke="#e08a30" stroke-width="2.3"/>
</svg>
<svg class="a" style="left:116px;top:528px" width="18" height="18">
<defs><linearGradient id="tbg" x1="0.2" y1="0" x2="0.8" y2="1"><stop offset="0" stop-color="#fff"/><stop offset="1" stop-color="#c2dcf4"/></linearGradient></defs>
<circle cx="9" cy="9" r="7.8" fill="url(#tbg)" stroke="#6a7280" stroke-width="1"/>
<rect x="5" y="5.5" width="1.6" height="7" fill="#1d4a80"/><path d="M6.5,9 L12.5,5.5 L12.5,12.5Z" fill="#1d4a80"/>
</svg>
<svg class="a" style="left:140px;top:528px" width="18" height="18">
<circle cx="9" cy="9" r="7.8" fill="url(#tbg)" stroke="#6a7280" stroke-width="1"/>
<path d="M7,5.5 L12.5,9 L7,12.5Z" fill="#1d4a80"/>
</svg>
<svg class="a" style="left:171px;top:529px" width="18" height="16">
<rect x="1" y="1" width="16" height="14" rx="1" fill="#c8d6f4" stroke="#3d5ab0" stroke-width="1"/>
<rect x="4" y="4" width="10" height="8" fill="#e8eefc" stroke="#5a76c0" stroke-width="0.8"/>
<path d="M2,2.5 h14 M2,13.5 h14" stroke="#fff" stroke-width="1" stroke-dasharray="1.2,1.3"/>
</svg>
<div class="t" style="left:191px;top:532px;font-size:11px;letter-spacing:-0.2px">Pokaż serię ujęć</div>
<!-- /TLTOOL -->
<!-- RED --><svg class="a" style="left:0;top:0" width="1024" height="738" shape-rendering="crispEdges"><g fill="none" stroke="#ff0000" stroke-width="4.3" stroke-linejoin="round" stroke-linecap="round">
<path d="M356.1,112.3 C363.8,109.5 371.4,106.7 379.1,106.1 C386.8,105.5 394.5,106.8 402.2,108.8 C409.9,110.8 417.9,114.0 425.2,118.0 C432.5,122.0 441.5,128.0 445.9,133.0 C450.3,138.0 450.0,141.7 451.7,148.0 C453.4,154.3 454.9,163.3 456.3,171.0 C457.7,178.7 459.0,186.3 459.8,194.0 C460.6,201.7 461.3,210.1 460.9,217.0 C460.5,223.9 459.6,230.4 457.5,235.6 C455.4,240.8 454.1,244.7 448.2,248.2 C442.3,251.7 429.2,255.3 422.0,256.8 C414.8,258.3 411.2,257.2 405.0,257.2 C398.8,257.2 391.2,257.5 385.0,256.6 C378.8,255.7 374.7,255.6 367.6,251.7 C360.5,247.8 348.5,240.1 342.3,233.2 C336.1,226.3 334.0,218.6 330.7,210.2 C327.4,201.8 324.6,191.8 322.7,182.6 C320.8,173.4 319.2,163.0 319.2,154.9 C319.2,146.8 320.4,139.6 322.7,134.2 C325.0,128.8 327.4,126.2 333.0,122.6 C338.6,118.9 348.4,115.0 356.1,112.3Z"/>
<path d="M530.7,105.2 C538.8,105.6 549.1,108.9 557.6,112.1 C566.1,115.3 573.9,119.0 582.0,124.3 C590.1,129.6 599.4,137.7 606.3,143.8 C613.2,149.9 619.3,154.8 623.4,160.9 C627.5,167.0 629.7,173.9 630.7,180.4 C631.7,186.9 631.1,193.0 629.5,199.9 C627.9,206.8 624.9,214.5 621.0,221.8 C617.1,229.1 611.2,237.3 606.3,243.8 C601.4,250.3 597.8,257.0 591.7,260.9 C585.6,264.8 577.5,266.4 569.8,267.0 C562.1,267.6 553.5,266.8 545.4,264.5 C537.3,262.2 528.3,258.2 521.0,253.5 C513.7,248.8 508.0,243.4 501.5,236.5 C495.0,229.6 486.5,220.1 482.0,212.0 C477.5,203.9 475.8,197.0 474.6,187.7 C473.4,178.4 474.2,164.5 474.6,156.0 C475.0,147.5 474.7,142.2 477.1,136.5 C479.6,130.8 484.0,126.3 489.3,121.8 C494.6,117.3 501.9,112.4 508.8,109.6 C515.7,106.8 522.6,104.8 530.7,105.2Z"/>
<path d="M367,254 L429,640"/>
<path d="M530,261 L173,592"/>
</g><g fill="#ff0000">
<path d="M168,585 L179,585 L181.5,588 L181.5,599 L178,602 L169,602 L166,599 L166,589Z"/>
<path d="M423,635 L436,635 L438.5,637.5 L438.5,647 L436,650 L423,650 L421,647.5 L421,637.5Z"/>
</g></svg><!-- /RED -->
</body></html>
